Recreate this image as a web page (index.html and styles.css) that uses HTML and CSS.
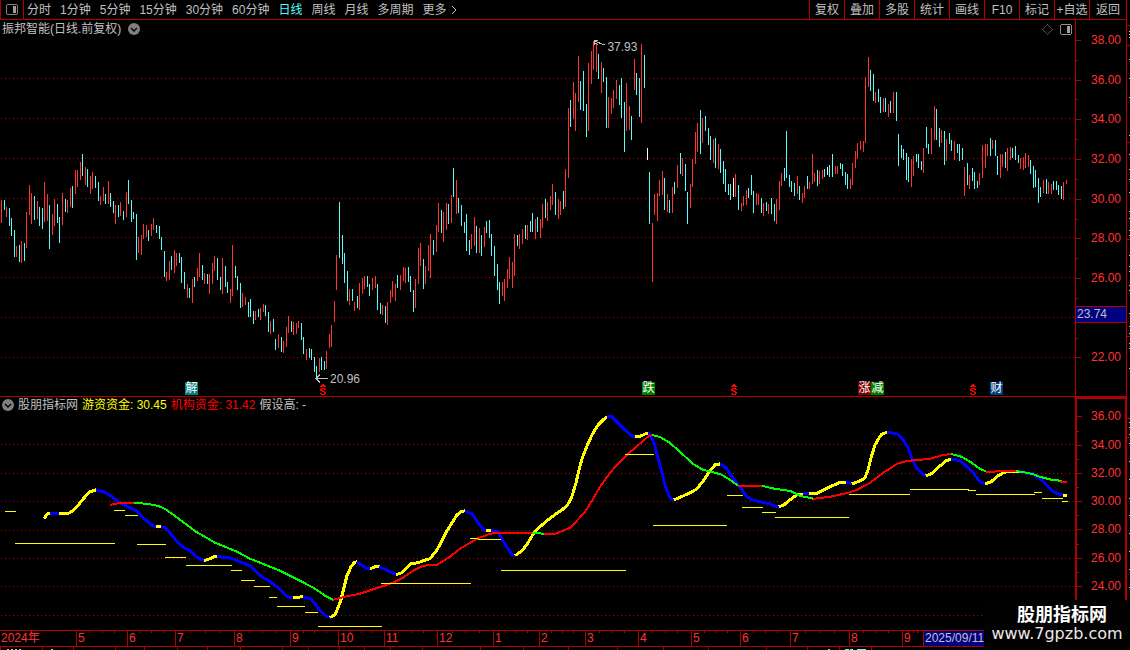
FILE: index.html
```
<!DOCTYPE html>
<html lang="zh-CN">
    <head>
        <meta charset="UTF-8">
        <meta name="viewport" content="width=device-width, initial-scale=1.0">
        <title>振邦智能 日线</title>
        <link rel="stylesheet" href="styles.css">
    </head>

    <body>
        <div class="main">
            <header class="toolbar">
                <button class="layout-button" aria-label="布局">
                    <svg width="12" height="11" viewBox="0 0 12 11" shape-rendering="crispEdges">
                        <path fill="#808080" d="M1 0h10v1H1zM1 10h10v1H1zM0 1h1v9H0zM11 1h1v9h-1z"/>
                        <path fill="#a0a0a0" d="M7 2h3v7H7z"/>
                    </svg>
                </button>
                <nav class="periods">
                    <button>分时</button>
                    <button>1分钟</button>
                    <button>5分钟</button>
                    <button>15分钟</button>
                    <button>30分钟</button>
                    <button>60分钟</button>
                    <button class="active">日线</button>
                    <button>周线</button>
                    <button>月线</button>
                    <button>多周期</button>
                    <button class="more">更多<svg width="6" height="10" viewBox="0 0 6 10"><path d="M1 1l4 4-4 4" fill="none" stroke="#c0c0c0"/></svg></button>
                </nav>
                <nav class="tools">
                    <button>复权</button>
                    <button>叠加</button>
                    <button>多股</button>
                    <button>统计</button>
                    <button>画线</button>
                    <button>F10</button>
                    <button>标记</button>
                    <button>+自选</button>
                    <button>返回</button>
                </nav>
            </header>

            <section class="panel price-panel">
                <div class="canvas" id="priceCanvas">
                    <svg class="plot" id="pricePlot" viewBox="0 20 1075 376" preserveAspectRatio="none" shape-rendering="crispEdges">
                        <defs>
                            <pattern id="dots" width="4" height="1" patternUnits="userSpaceOnUse">
                                <rect x="1" width="1" height="1" fill="#b00000"/>
                            </pattern>
                        </defs>
                        <g class="arrow">
                            <path d="M594 41l11 4M594 45v-5h4M594 42l4 3"/>
                            <path d="M316 378h12M320 374l-4 4 4 4"/>
                        </g>
                    </svg>
                    <div class="caption">
                        <span>振邦智能(日线.前复权)</span>
                        <button class="round" aria-label="展开">
                            <svg width="12" height="12" viewBox="0 0 12 12"><circle cx="6" cy="6" r="6" fill="#808080"/><path d="M3 5l3 3 3-3" fill="none" stroke="#000" stroke-width="1.4"/></svg>
                        </button>
                    </div>
                    <div class="corner">
                        <svg width="11" height="11" viewBox="0 0 11 11"><path d="M5.500 .5l5 5-5 5-5-5z" fill="none" stroke="#909090" stroke-dasharray="1 .6"/></svg>
                        <svg width="12" height="11" viewBox="0 0 12 11" shape-rendering="crispEdges">
                            <path fill="#909090" d="M1 0h10v1H1zM1 10h10v1H1zM0 1h1v9H0zM11 1h1v9h-1z"/>
                            <path fill="#a0a0a0" d="M7 2h3v7H7z"/>
                        </svg>
                    </div>
                    <span class="extreme high">37.93</span>
                    <span class="extreme low">20.96</span>
                </div>
                <div class="axis">
                    <ul class="scale">
                        <li>38.00</li>
                        <li>36.00</li>
                        <li>34.00</li>
                        <li>32.00</li>
                        <li>30.00</li>
                        <li>28.00</li>
                        <li>26.00</li>
                        <li></li>
                        <li>22.00</li>
                    </ul>
                    <span class="cursor-price">23.74</span>
                </div>
            </section>

            <section class="panel fund-panel">
                <div class="canvas">
                    <svg class="plot" id="fundPlot" viewBox="0 397 1075 233" preserveAspectRatio="none" shape-rendering="crispEdges"></svg>
                    <div class="caption">
                        <button class="round" aria-label="展开指标">
                            <svg width="12" height="12" viewBox="0 0 12 12"><circle cx="6" cy="6" r="6" fill="#808080"/><path d="M3 5l3 3 3-3" fill="none" stroke="#000" stroke-width="1.4"/></svg>
                        </button>
                        <span>股朋指标网</span>
                        <span class="yellow">游资资金: 30.45</span>
                        <span class="red">机构资金: 31.42</span>
                        <span>假设高: -</span>
                    </div>
                </div>
                <div class="axis">
                    <ul class="scale">
                        <li>36.00</li>
                        <li>34.00</li>
                        <li>32.00</li>
                        <li>30.00</li>
                        <li>28.00</li>
                        <li>26.00</li>
                        <li>24.00</li>
                    </ul>
                </div>
            </section>

            <div class="months">
                <span class="year">2024年</span>
                <span>5</span>
                <span>6</span>
                <span>7</span>
                <span>8</span>
                <span>9</span>
                <span>10</span>
                <span>11</span>
                <span>12</span>
                <span>1</span>
                <span>2</span>
                <span>3</span>
                <span>4</span>
                <span>5</span>
                <span>6</span>
                <span>7</span>
                <span>8</span>
                <span>9</span>
                <span class="date">2025/09/11</span>
            </div>
            <svg class="ruler" id="ruler" viewBox="0 0 1126 3" preserveAspectRatio="none" shape-rendering="crispEdges"></svg>
        </div>
        <svg class="rail" id="rail" viewBox="0 0 3 650" preserveAspectRatio="none" shape-rendering="crispEdges"></svg>

        <div class="watermark">
            <strong>股朋指标网</strong>
            <span>www.7gpzb.com</span>
        </div>

        <script src="script.js"></script>
    </body>
</html>
```
FILE: styles.css
```
* {
    box-sizing: border-box;
}
body {
    margin: 0;
    height: 100vh;
    display: flex;
    position: relative;
    overflow: hidden;
    background-color: #000;
    color: #c0c0c0;
    font-family: "Liberation Sans", "Noto Sans CJK SC", sans-serif;
    font-size: 12px;
    line-height: 16px;
    white-space: nowrap;
}
button {
    margin: 0;
    padding: 0;
    border: none;
    background: none;
    color: inherit;
    font: inherit;
    cursor: pointer;
}
svg {
    display: block;
}
.main {
    flex: 1;
    min-width: 0;
    display: flex;
    flex-direction: column;
}

/* toolbar */
.toolbar {
    height: 20px;
    display: flex;
    border-bottom: 1px solid #b00000;
}
.layout-button {
    width: 24px;
    display: flex;
    justify-content: center;
    align-items: center;
    border-left: 1px solid #b00000;
    border-right: 1px solid #b00000;
}
.periods {
    display: flex;
    gap: 9px;
    padding-left: 3px;
}
.periods .active {
    color: #54fcfc;
}
.periods .more {
    display: flex;
    align-items: center;
    gap: 4px;
}
.tools {
    display: flex;
    margin-left: auto;
}
.tools button {
    width: 35px;
    border-left: 1px solid #b00000;
}
.tools button:last-child {
    width: 37px;
}
button:hover {
    color: #fff;
}

/* chart panels */
.panel {
    display: flex;
    min-height: 0;
}
.price-panel {
    flex: 377 1 0;
    border-bottom: 1px solid #b00000;
}
.fund-panel {
    flex: 233 1 0;
}
.canvas {
    flex: 1;
    position: relative;
    min-width: 0;
}
.plot {
    position: absolute;
    width: 100%;
    height: 100%;
}
.caption {
    position: absolute;
    top: 1px;
    left: 2px;
    display: flex;
    align-items: center;
    gap: 7px;
}
.fund-panel .caption {
    top: 0;
    gap: 4px;
}
.yellow {
    color: #ff0;
}
.red {
    color: #f00;
}
.corner {
    position: absolute;
    top: 4px;
    right: 3px;
    display: flex;
    gap: 7px;
}
.extreme {
    position: absolute;
}
.extreme.high {
    left: 56.5%;
    top: 5%;
}
.extreme.low {
    left: 30.7%;
    bottom: 2.5%;
}
.tag {
    position: absolute;
    bottom: 1px;
    width: 13px;
    height: 13px;
    line-height: 13px;
    text-align: center;
    color: #fff;
}
.teal { background-color: #008080; }
.green { background-color: #008000; }
.maroon { background-color: #800000; }
.navy { background-color: #004080; }
.dividend {
    position: absolute;
    bottom: 0;
}
.arrow {
    fill: none;
    stroke: #c0c0c0;
}

/* value axis */
.axis {
    width: 51px;
    position: relative;
    display: flex;
    border-left: 1px solid #b00000;
    color: #ff3232;
}
.fund-panel .axis {
    border: 2px solid #b00000;
    border-right-width: 1px;
    border-bottom: none;
}
.scale {
    flex: 1;
    margin: 0;
    padding: 0 0 19px;
    list-style: none;
    display: flex;
    flex-direction: column;
}
.fund-panel .scale {
    padding: 3px 0 30px;
}
.scale li {
    flex: 1 1 0;
    position: relative;
    display: flex;
    align-items: center;
    justify-content: flex-end;
    padding-right: 5px;
}
.fund-panel .scale li {
    padding-right: 4px;
}
.scale li::before,
.scale li::after {
    content: "";
    position: absolute;
    left: 0;
    top: 50%;
    width: 5px;
    height: 1px;
    background-color: #b00000;
}
.scale li::after {
    top: 100%;
    width: 2px;
}
.scale li:last-child::after {
    display: none;
}
.cursor-price {
    position: absolute;
    left: 0;
    right: 0;
    top: 76%;
    height: 17px;
    padding-left: 1px;
    line-height: 15px;
    border-top: 1px solid #b00000;
    border-bottom: 1px solid #b00000;
    background-color: #000080;
    color: #c0c0c0;
}

/* time axis, one column per month, sized by its trading days */
.months {
    height: 17px;
    display: grid;
    grid-template-columns: 76fr 51fr 48fr 59fr 56fr 48fr 46fr 53fr 56fr 46fr 46fr 53fr 53fr 49fr 50fr 59fr 53fr 21fr 203fr;
    border-top: 1px solid #b00000;
    border-bottom: 1px solid #b00000;
    color: #ff3232;
    line-height: 15px;
}
.months span {
    min-width: 0;
    padding-left: 1px;
    border-left: 1px solid #b00000;
    background-image: linear-gradient(#b00000, #b00000), linear-gradient(#b00000, #b00000), linear-gradient(#b00000, #b00000);
    background-size: 1px 2px;
    background-position: 25% 0, 50% 0, 75% 0;
    background-repeat: no-repeat;
}
.months .year {
    border-left: none;
    background-image: none;
}
.months .date {
    background-image: none;
    background-color: #000080;
    color: #c0c0c0;
}
.ruler {
    width: 100%;
    height: 3px;
}
.rail {
    width: 4px;
    height: 100%;
    border-left: 1px solid #b00000;
}

.watermark {
    position: absolute;
    right: 0;
    bottom: 0;
    width: 146px;
    height: 50px;
    padding-top: 5px;
    display: flex;
    flex-direction: column;
    align-items: center;
    background-color: #020202;
    color: #fff;
}
.watermark strong {
    padding-left: 10px;
    font-size: 18px;
    line-height: 20px;
}
.watermark span {
    font-family: "DejaVu Sans", sans-serif;
    font-size: 16px;
    line-height: 18px;
    color: #f0e8e8;
}
```
FILE: script.js
```
const SVG = 'http://www.w3.org/2000/svg';
const UP = '#ff3232';
const DOWN = '#54fcfc';
const FLAT = '#ffffff';
const LINE = '#b00000';

// x:high-low for every trading day
const upDays = `
1:200-223 6:207-217 16:246-257 21:241-263 26:212-248 29:185-215 31:193-224 37:201-219 44:182-222 47:194-221
52:214-235 54:199-226 62:193-225 67:200-213 70:188-207 75:170-194 77:170-187 80:162-180 85:167-185 90:176-194
92:172-189 100:196-205 103:187-201 108:181-204 115:205-224 120:202-216 126:192-217 138:237-253 141:235-255
143:224-239 146:225-237 151:224-236 153:218-230 166:272-281 169:261-280 174:250-273 176:253-266 187:284-298
192:279-303 197:268-281 199:253-277 204:273-284 209:274-294 212:263-284 214:256-271 222:258-294 230:289-303
232:245-296 242:293-307 245:297-305 255:311-320 260:308-320 263:304-312 270:321-334 278:334-348 283:341-353
286:327-347 288:316-333 293:322-335 296:323-334 298:321-328 306:349-360 319:358-372 326:351-369 329:334-348
331:325-347 334:301-322 336:255-290 349:289-305 354:302-311 359:283-310 362:278-294 364:276-289 372:278-290
375:276-288 382:305-315 387:302-325 390:290-303 392:281-297 395:284-301 400:275-290 403:267-281 405:268-283
415:279-308 418:248-284 420:243-266 425:266-284 428:245-271 430:234-278 436:225-252 438:203-232 443:212-242
446:203-230 451:195-223 456:180-214 471:234-249 474:217-246 479:228-253 484:227-247 502:282-296 504:279-301
507:269-288 509:257-279 512:262-288 514:234-276 519:234-249 522:229-244 527:225-240 535:219-239 540:219-238
542:204-228 547:202-221 550:196-210 552:184-205 558:199-219 560:201-215 565:169-207 568:108-178 573:82-119
575:93-131 578:56-102 588:63-131 591:51-84 593:41-70 596:44-72 601:62-93 608:97-128 611:98-114 613:90-108
616:80-99 626:83-131 629:106-130 634:59-90 641:44-123 652:223-282 654:194-215 657:193-221 659:180-196
662:171-195 667:194-212 672:187-213 677:165-188 682:158-176 690:184-208 692:159-187 695:132-164 697:123-152
702:118-143 713:139-163 718:144-169 735:174-197 741:203-211 743:196-206 746:190-205 756:193-205 758:194-205
763:203-216 768:204-214 776:199-224 779:181-210 781:173-186 797:176-194 802:193-203 804:186-198 809:182-189
812:154-184 814:173-182 819:171-184 822:170-179 835:166-174 837:166-174 850:179-189 852:163-185 855:151-168
857:143-159 860:141-150 863:141-152 865:77-143 868:57-87 875:92-103 883:98-112 888:104-117 893:92-113
911:159-187 913:156-176 923:148-173 931:128-154 934:106-140 941:130-143 946:139-161 954:141-160 964:167-196
969:175-189 979:173-185 982:145-178 985:144-168 987:144-156 992:140-149 1000:154-178 1002:154-167 1007:148-171
1010:147-160 1020:158-169 1023:157-170 1025:153-168 1028:155-167 1043:180-193 1048:182-194 1051:184-194
1063:182-200 1066:180-184`;

const downDays = `
4:200-210 9:208-226 11:218-236 14:230-257 19:245-262 24:243-261 34:196-220 39:207-226 42:208-229 49:205-249
57:204-223 59:217-243 65:199-212 72:186-208 82:154-176 87:169-187 95:176-188 98:182-201 105:194-204 110:193-207
113:201-213 118:205-217 123:211-220 128:180-204 131:200-222 133:212-219 136:214-260 148:230-241 156:225-233
159:226-239 161:237-250 164:251-277 171:256-270 179:253-263 181:257-283 184:272-289 189:288-298 194:277-287
202:265-280 207:274-284 217:258-280 220:277-290 225:266-287 227:282-293 235:266-278 237:276-290 240:283-308
248:302-317 250:299-317 253:311-324 258:309-317 265:305-316 268:312-332 273:319-332 275:339-350 281:337-352
291:321-332 301:323-340 303:337-354 309:348-358 311:349-360 314:357-372 316:366-377 321:357-370 324:361-370
339:202-258 342:235-264 344:253-283 347:271-301 352:289-301 357:296-308 367:276-287 369:284-296 377:284-310
380:303-314 385:306-323 397:275-288 408:267-282 410:276-292 413:290-312 423:259-289 433:240-255 441:210-233
448:204-224 453:168-197 458:198-213 461:205-226 464:222-233 466:214-251 469:240-255 476:226-253 481:235-256
486:221-233 489:220-238 491:234-256 494:246-276 497:264-290 499:282-304 517:235-246 525:225-239 530:221-232
532:213-232 537:217-232 545:199-218 555:192-215 563:191-209 570:100-127 580:81-110 583:71-111 586:104-137
598:54-79 603:68-82 606:77-128 619:85-105 621:78-118 624:102-152 631:116-140 636:73-95 639:78-117 644:55-88
649:172-224 664:178-210 669:200-213 674:182-194 680:153-174 685:164-191 687:192-224 700:110-154 705:116-131
708:128-145 710:136-160 715:138-168 720:149-173 723:161-184 725:169-192 728:184-195 730:184-200 738:185-210
748:188-198 751:175-195 753:191-213 761:198-213 766:202-211 771:198-214 774:204-221 784:168-181 786:131-178
789:175-187 791:181-192 794:183-196 799:186-200 807:176-189 817:170-186 824:169-177 829:165-177 832:154-177
840:163-169 842:164-176 845:172-185 847:174-189 870:70-91 873:74-101 878:89-102 880:97-113 885:98-112
890:101-113 896:92-121 898:134-166 901:145-158 903:149-160 906:153-180 908:157-182 916:154-162 918:154-168
921:161-170 926:127-148 928:144-154 936:109-140 939:128-147 944:131-165 949:133-144 951:140-151 957:144-153
959:144-161 962:148-160 967:163-185 972:168-181 974:172-189 977:181-188 990:138-156 995:140-156 997:156-175
1005:152-168 1012:148-158 1015:146-160 1018:155-163 1030:160-174 1033:166-188 1035:170-187 1038:178-203
1040:187-197 1046:179-194 1053:181-190 1056:181-190 1058:185-195 1061:186-199`;

const flatDays = '647:148-160 733:178-197 827:167-175';

// hot money: yellow while rising, blue while falling
const hotMoney = [
    ['#ff0', '44,519 46,516 48,514 52,514'],
    ['#00f', '50,514 60,514'],
    ['#ff0', '59,514 66,514 70,513 76,508 80,503 85,497 90,492 96,490'],
    ['#00f', '96,490 104,492 111,496 117,501 122,504 130,508 136,511 142,517 148,522 153,526 157,527'],
    ['#ff0', '156,527 162,527'],
    ['#00f', '161,527 165,528 170,533 178,543 184,548 190,551 196,557 202,560 205,561'],
    ['#ff0', '204,561 210,559 214,557 218,557'],
    ['#00f', '217,557 230,558 240,562 250,566 255,571 262,577 270,582 277,587 283,593 287,597 294,598'],
    ['#ff0', '293,598 304,597'],
    ['#00f', '303,597 310,599 315,604 320,611 325,616 331,618'],
    ['#ff0', '330,618 335,615 338,608 341,600 344,588 347,576 351,567 354,563 357,562'],
    ['#00f', '357,562 362,566 367,569 371,569'],
    ['#ff0', '370,569 375,567 380,567'],
    ['#00f', '379,567 386,570 392,573 397,575'],
    ['#ff0', '396,575 402,573 408,567 411,564 418,563 423,561 430,559 437,550 442,541 447,531 452,523 457,515 461,512 465,511'],
    ['#00f', '465,511 472,514 478,523 484,530 487,531'],
    ['#ff0', '486,531 492,531'],
    ['#00f', '491,531 498,532 502,540 508,549 512,555 516,556'],
    ['#ff0', '515,556 522,551 528,543 534,533 540,527 548,520 556,514 562,510 567,506 571,499 573,493 576,483 580,466 583,456 587,446 592,435 598,425 603,420 607,417'],
    ['#00f', '607,417 612,417 620,425 626,431 632,436 636,437'],
    ['#ff0', '635,437 641,436 645,434 648,433'],
    ['#00f', '648,433 650,434 653,441 655,446 658,458 662,473 665,485 669,496 672,500 675,500'],
    ['#ff0', '674,500 681,497 690,493 697,489 704,480 710,471 715,465 720,464'],
    ['#00f', '720,464 726,468 731,475 737,484 742,490 746,496 752,500 760,502 770,504 777,507 780,507'],
    ['#ff0', '779,507 784,505 790,500 797,495 804,494'],
    ['#00f', '803,494 810,494'],
    ['#ff0', '809,494 816,494 824,490 832,486 839,483 847,482'],
    ['#00f', '846,482 853,484'],
    ['#ff0', '852,484 860,481 865,478 868,470 871,458 875,445 879,438 882,434 888,432'],
    ['#00f', '887,432 897,434 902,438 908,448 912,459 917,469 922,474 928,476'],
    ['#ff0', '926,476 933,473 940,466 946,461 952,459'],
    ['#00f', '951,459 960,461 967,467 974,474 980,482 986,484'],
    ['#ff0', '985,484 991,482 998,476 1003,473 1006,472 1020,472'],
    ['#00f', '1019,472 1033,474 1040,479 1046,485 1052,491 1058,494 1064,495'],
    ['#ff0', '1063,496 1067,496']
];

// institutions: red while rising, green while falling
const institutions = [
    ['#f00', '110,505 120,503 134,503'],
    ['#0f0', '134,503 147,504 158,506 165,509 172,514 180,520 188,526 196,532 205,537 215,543 225,547 237,552 250,559 265,565 280,571 290,576 302,582 315,589 325,596 333,600'],
    ['#f00', '333,600 345,597 360,594 375,589 393,583 403,578 413,571 423,566 437,565 450,557 460,549 477,539 490,534 497,533 532,533'],
    ['#0f0', '532,533 545,534'],
    ['#f00', '544,534 555,534 563,531 570,528 576,522 585,512 592,501 600,487 610,473 618,464 627,455 643,441 649,436 653,435'],
    ['#0f0', '652,435 660,437 670,443 680,452 693,464 703,470 712,472 722,475 730,480 738,486'],
    ['#f00', '738,486 763,486'],
    ['#0f0', '762,486 775,489 790,491 800,496 814,499'],
    ['#f00', '813,499 830,497 848,493 857,490 870,483 883,473 897,464 907,461 930,459 943,455 952,454'],
    ['#0f0', '951,454 962,457 972,463 980,469 987,472'],
    ['#f00', '986,472 1010,471 1018,471'],
    ['#0f0', '1016,471 1032,474 1040,477 1052,480 1062,481'],
    ['#f00', '1060,482 1067,482']
];

// start, end, level
const levels = [
    [5, 16, 511], [15, 115, 543], [114, 125, 510], [125, 138, 515], [137, 166, 544], [165, 186, 557],
    [186, 232, 565], [231, 242, 570], [241, 255, 580], [254, 270, 586], [269, 277, 597], [277, 305, 606],
    [305, 318, 612], [318, 382, 626], [381, 471, 583], [470, 478, 538], [478, 501, 539], [501, 626, 570],
    [625, 654, 454], [653, 727, 525], [727, 743, 495], [742, 763, 507], [762, 776, 512], [775, 849, 517],
    [849, 910, 494], [910, 969, 489], [968, 976, 490], [976, 1035, 494], [1034, 1042, 492], [1042, 1063, 498],
    [1062, 1068, 501]
];

const tags = [
    [185, '解', 'teal'], [642, '跌', 'green'], [858, '涨', 'maroon'], [871, '减', 'green'], [990, '财', 'navy']
];
const dividends = [320, 731, 970];

function rect(svg, x, y, width, height, fill) {
    const el = document.createElementNS(SVG, 'rect');
    el.setAttribute('x', x);
    el.setAttribute('y', y);
    el.setAttribute('width', width);
    el.setAttribute('height', height);
    el.setAttribute('fill', fill);
    svg.appendChild(el);
}

function bars(svg, text, color) {
    text.trim().split(/\s+/).forEach(function(item) {
        const [x, high, low] = item.split(/[:-]/).map(Number);
        rect(svg, x, high, 1, low - high, color);
    });
}

function curve(svg, parts, width) {
    parts.forEach(function([color, points]) {
        const el = document.createElementNS(SVG, 'polyline');
        el.setAttribute('points', points);
        el.setAttribute('fill', 'none');
        el.setAttribute('stroke', color);
        el.setAttribute('stroke-width', width);
        svg.appendChild(el);
    });
}

const pricePlot = document.getElementById('pricePlot');
[78, 118, 158, 198, 237, 277, 317, 357].forEach(y => rect(pricePlot, 0, y, 1075, 1, 'url(#dots)'));
bars(pricePlot, upDays, UP);
bars(pricePlot, downDays, DOWN);
bars(pricePlot, flatDays, FLAT);

const fundPlot = document.getElementById('fundPlot');
[444, 473, 501, 530, 558, 586, 615].forEach(y => rect(fundPlot, 0, y, 1075, 1, 'url(#dots)'));
curve(fundPlot, hotMoney, 3);
curve(fundPlot, institutions, 2);
levels.forEach(([from, to, y]) => rect(fundPlot, from, y, to - from, 1, '#ff0'));

const priceCanvas = document.getElementById('priceCanvas');
tags.forEach(function([x, text, color]) {
    const tag = document.createElement('span');
    tag.className = 'tag ' + color;
    tag.textContent = text;
    tag.style.left = x / 1075 * 100 + '%';
    priceCanvas.appendChild(tag);
});
dividends.forEach(function(x) {
    const mark = document.createElement('span');
    mark.className = 'dividend';
    mark.style.left = x / 1075 * 100 + '%';
    mark.innerHTML = `
        <svg width="6" height="12" viewBox="0 0 6 12" shape-rendering="crispEdges">
            <path fill="#f00" d="M2 0h2v1h1v1h1v1H0V2h1V1h1zM1 4h4v1h1v1H4V5H2v1h1v1h2v1h1v2H5v1H1v-1H0V9h2v1h2V8H2V7H0V5h1z"/>
        </svg>
    `;
    priceCanvas.appendChild(mark);
});

const ruler = document.getElementById('ruler');
[0, 42, 73, 115, 144, 177, 207, 240, 282, 308, 339, 364, 390, 422, 480, 523, 568, 617, 663, 708, 766, 807, 839, 871]
    .forEach(x => rect(ruler, x, 0, 1, 3, LINE));
[7, 11, 15, 19, 51, 828].forEach(x => rect(ruler, x, 2, 2, 1, '#c0c0c0'));
[[845, 4], [850, 3], [857, 9]].forEach(([x, w]) => rect(ruler, x, 2, w, 1, DOWN));

const rail = document.getElementById('rail');
[25, 45, 142, 239, 336, 418, 437].forEach(y => rect(rail, 0, y, 3, 1, LINE));
[31, 34, 37, 59, 78, 97, 135, 154, 169, 179, 192, 211, 218, 230, 235, 255, 266, 271, 285, 290, 313, 326, 333, 343, 348,
    368, 422, 427, 434, 443, 461, 479, 498, 515, 533, 551, 569, 587].forEach(y => rect(rail, 2, y, 1, 1, '#c0c0c0'));
```
